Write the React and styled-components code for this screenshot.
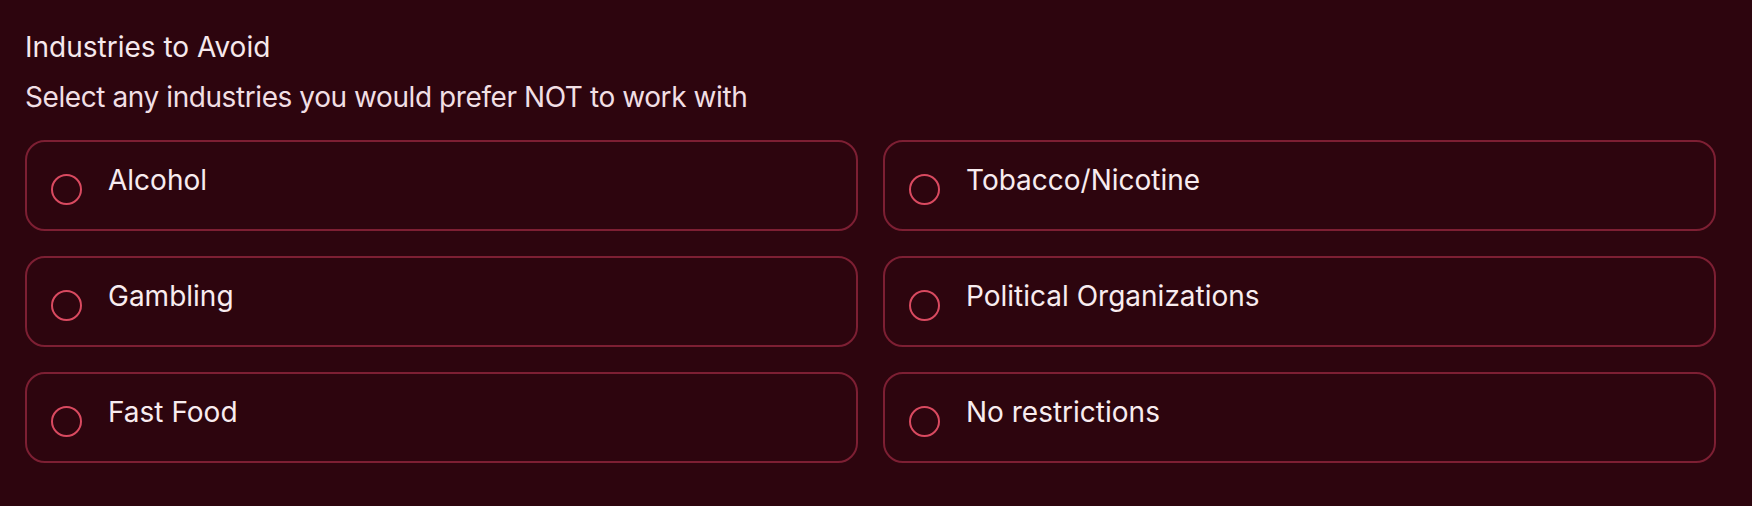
import React, { useState } from 'react';
import styled, { createGlobalStyle } from 'styled-components';

const GlobalStyle = createGlobalStyle`
  html, body {
    margin: 0;
    padding: 0;
    background: #2d050e;
  }
  body {
    font-family: Inter, "Noto Sans", "Liberation Sans", sans-serif;
    -webkit-font-smoothing: antialiased;
  }
`;

const Page = styled.div`
  min-height: 506px;
  box-sizing: border-box;
  padding: 30px 36px 0 25px;
  background: #2d050e;
  color: #f6e9ec;
`;

const Heading = styled.h2`
  margin: 0;
  font-size: 28px;
  font-weight: 400;
  line-height: 34px;
  color: #f6e9ec;
`;

const Subtitle = styled.p`
  margin: 16px 0 0;
  font-size: 28px;
  font-weight: 400;
  line-height: 34px;
  letter-spacing: -0.42px;
  color: #f1dfe4;
`;

const Options = styled.div`
  display: grid;
  grid-template-columns: 1fr 1fr;
  gap: 25px;
  margin-top: 26px;
`;

const Option = styled.label`
  display: flex;
  align-items: flex-start;
  gap: 26px;
  box-sizing: border-box;
  height: 91px;
  padding: 21px 24px 0;
  border: 2px solid ${(p) => (p.$checked ? '#d94a60' : '#7d1f33')};
  border-radius: 20px;
  background: ${(p) => (p.$checked ? '#3d0a17' : 'transparent')};
  cursor: pointer;
`;

const Radio = styled.span`
  flex: none;
  width: 31px;
  height: 31px;
  margin-top: 11px;
  box-sizing: border-box;
  border: 2px solid #d94a60;
  border-radius: 50%;
  display: flex;
  align-items: center;
  justify-content: center;

  &::after {
    content: '';
    width: 15px;
    height: 15px;
    border-radius: 50%;
    background: #d94a60;
    display: ${(p) => (p.$checked ? 'block' : 'none')};
  }
`;

const OptionLabel = styled.span`
  font-size: 28px;
  line-height: 34px;
  color: #f8ecef;
`;

const industries = [
  'Alcohol',
  'Tobacco/Nicotine',
  'Gambling',
  'Political Organizations',
  'Fast Food',
  'No restrictions',
];

export default function App() {
  const [selected, setSelected] = useState([]);

  const toggle = (name) =>
    setSelected((prev) =>
      prev.includes(name) ? prev.filter((n) => n !== name) : [...prev, name]
    );

  return (
    <Page>
      <GlobalStyle />
      <Heading>Industries to Avoid</Heading>
      <Subtitle>Select any industries you would prefer NOT to work with</Subtitle>
      <Options>
        {industries.map((name) => {
          const checked = selected.includes(name);
          return (
            <Option key={name} $checked={checked} onClick={() => toggle(name)}>
              <Radio $checked={checked} />
              <OptionLabel>{name}</OptionLabel>
            </Option>
          );
        })}
      </Options>
    </Page>
  );
}
